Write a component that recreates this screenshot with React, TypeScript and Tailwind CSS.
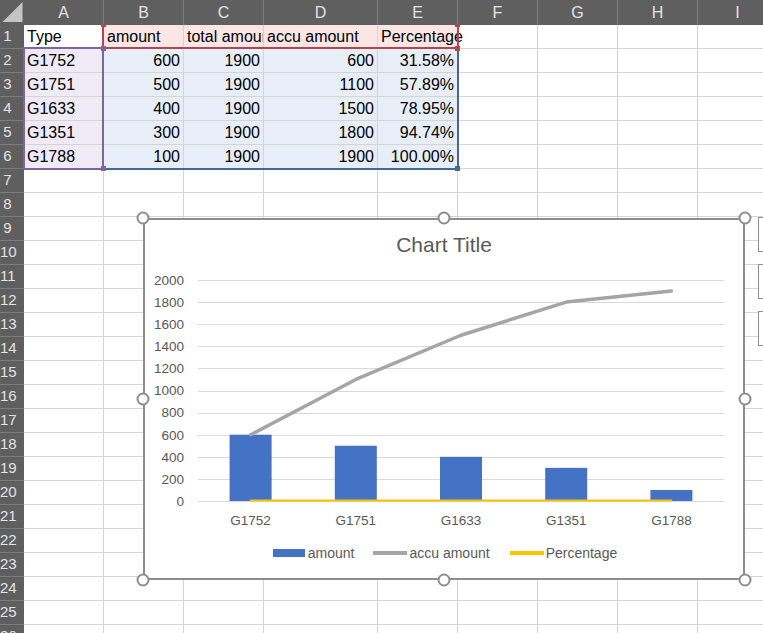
import React from "react";

const letters = ["A", "B", "C", "D", "E", "F", "G", "H", "I"];
const colW = ["w-[80px]", "w-[80px]", "w-[80px]", "w-[114px]", "w-[80px]", "w-[80px]", "w-[80px]", "w-[80px]", "w-[80px]"];

const table = [
  ["Type", "amount", "total amount", "accu amount", "Percentage"],
  ["G1752", "600", "1900", "600", "31.58%"],
  ["G1751", "500", "1900", "1100", "57.89%"],
  ["G1633", "400", "1900", "1500", "78.95%"],
  ["G1351", "300", "1900", "1800", "94.74%"],
  ["G1788", "100", "1900", "1900", "100.00%"],
];

const series = [
  { name: "G1752", amount: 600, accu: 600, pct: 0.3158 },
  { name: "G1751", amount: 500, accu: 1100, pct: 0.5789 },
  { name: "G1633", amount: 400, accu: 1500, pct: 0.7895 },
  { name: "G1351", amount: 300, accu: 1800, pct: 0.9474 },
  { name: "G1788", amount: 100, accu: 1900, pct: 1 },
];

function cellBg(r: number, c: number) {
  if (r === 0) return c >= 1 && c <= 4 ? "bg-[#fbe6e6]" : "";
  if (r <= 5) return c === 0 ? "bg-[#efeaf5]" : c <= 4 ? "bg-[#e8eef8]" : "";
  return "";
}

// plot scale, page coords
const y = (v: number) => 501 - v * 0.1105;
const cx = (i: number) => 198 + 105.2 * (i + 0.5);

const handles = [
  "left-0 top-0",
  "left-1/2 top-0",
  "left-full top-0",
  "left-0 top-1/2",
  "left-full top-1/2",
  "left-0 top-full",
  "left-1/2 top-full",
  "left-full top-full",
];

function Chart() {
  const ticks = [0, 200, 400, 600, 800, 1000, 1200, 1400, 1600, 1800, 2000];
  const accuPts = series.map((s, i) => `${cx(i)},${y(s.accu)}`).join(" ");
  const pctPts = series.map((s, i) => `${cx(i)},${y(s.pct) - 0.5}`).join(" ");

  return (
    <div className="absolute left-[143px] top-[218px] flex items-start">
      <div className="relative">
        <div className="w-[602px] h-[362px] border-2 border-[#8d8d8d] bg-white flex flex-col text-[#595959]">
          <div className="h-[42px] pt-[13px] text-center text-[21px] leading-[24px]">Chart Title</div>
          <svg width="598" height="279" viewBox="145 262 598 279" className="block">
            {ticks.map((t) => (
              <g key={t}>
                <line x1="198" x2="724" y1={Math.round(y(t)) + 0.5} y2={Math.round(y(t)) + 0.5} stroke="#d9d9d9" strokeWidth="1" />
                <text x="184" y={y(t)} dy="0.36em" textAnchor="end" fontSize="13.5" fill="#595959">
                  {t}
                </text>
              </g>
            ))}
            {series.map((s, i) => (
              <rect key={s.name} x={cx(i) - 21} y={y(s.amount)} width="42" height={501 - y(s.amount)} fill="#4472c4" />
            ))}
            <polyline points={accuPts} fill="none" stroke="#a5a5a5" strokeWidth="3.5" strokeLinecap="round" strokeLinejoin="round" />
            <polyline points={pctPts} fill="none" stroke="#ffc000" strokeWidth="2" strokeLinecap="round" />
            {series.map((s, i) => (
              <text key={s.name} x={cx(i)} y="520" dy="0.36em" textAnchor="middle" fontSize="13.5" fill="#595959">
                {s.name}
              </text>
            ))}
          </svg>
          <div className="h-[24px] flex items-center justify-center text-[14px] pl-[2px]">
            <span className="w-[32px] h-[8px] bg-[#4472c4]" />
            <span className="ml-[3px]">amount</span>
            <span className="ml-[19px] w-[34px] h-[4px] bg-[#a5a5a5]" />
            <span className="ml-[2px]">accu amount</span>
            <span className="ml-[20px] w-[34px] h-[4px] bg-[#ffc000]" />
            <span className="ml-[2px]">Percentage</span>
          </div>
        </div>
        {handles.map((h) => (
          <div key={h} className={`absolute ${h} w-[13px] h-[13px] -translate-x-1/2 -translate-y-1/2 rounded-full border-2 border-[#8d8d8d] bg-white`} />
        ))}
      </div>
      {/* chart side buttons */}
      <div className="ml-[13px] -mt-[1px] flex flex-col gap-[12px]">
        <div className="w-[24px] h-[35px] border border-[#8d8d8d] bg-white" />
        <div className="w-[24px] h-[35px] border border-[#8d8d8d] bg-white" />
        <div className="w-[24px] h-[35px] border border-[#8d8d8d] bg-white" />
      </div>
    </div>
  );
}

export default function App() {
  const rowNums = Array.from({ length: 26 }, (_, i) => i + 1);

  return (
    <div className="relative w-[763px] h-[633px] overflow-hidden bg-white font-['Liberation_Sans',Arial,sans-serif]">
      {/* column headers */}
      <div className="flex h-[25px] bg-[#5f5f5f] text-[#e3e3e3]">
        <div className="w-[24px] shrink-0">
          <svg width="24" height="25" className="block">
            <polygon points="22.5,2 22.5,22 2.5,22" fill="#c4c4c4" />
          </svg>
        </div>
        {letters.map((l, i) => (
          <div key={l} className={`${colW[i]} shrink-0 border-r border-[#7c7c7c] flex items-center justify-center text-[16px]`}>
            {l}
          </div>
        ))}
      </div>

      {rowNums.map((n) => {
        const r = n - 1;
        const data = table[r];
        return (
          <div key={n} className="flex h-[24px]">
            <div className="w-[24px] shrink-0 bg-[#5f5f5f] border-b border-[#7c7c7c] text-[#e3e3e3] text-[15px] flex items-center">
              <span className="w-[15px] text-center whitespace-nowrap">{n}</span>
            </div>
            {letters.map((l, c) => {
              const txt = data && c <= 4 ? data[c] : "";
              const right = r > 0 && c > 0;
              return (
                <div
                  key={l}
                  className={`${colW[c]} shrink-0 border-r border-b border-[#d4d4d4] ${cellBg(r, c)} flex items-center pt-[1px] whitespace-nowrap text-[16px] text-black ${
                    right ? "justify-end pr-[3px]" : "pl-[3px]"
                  } ${c === 2 ? "overflow-hidden" : ""}`}
                >
                  {txt}
                </div>
              );
            })}
          </div>
        );
      })}

      {/* range highlights drawn over the cells */}
      <div className="absolute left-[102px] top-[47px] w-[357px] h-[123px] border-2 border-[#41699a]" />
      <div className="absolute left-[102px] top-[24px] w-[357px] h-[25px] border-x-2 border-b-2 border-[#b4454d]" />
      <div className="absolute left-[23px] top-[47px] w-[81px] h-[123px] border-2 border-[#7e64a1]" />
      <div className="absolute left-[101px] top-[46px] w-[5px] h-[5px] bg-[#7e64a1]" />
      <div className="absolute left-[101px] top-[166px] w-[5px] h-[5px] bg-[#7e64a1]" />
      <div className="absolute left-[455px] top-[46px] w-[5px] h-[5px] bg-[#b4454d]" />
      <div className="absolute left-[455px] top-[166px] w-[5px] h-[5px] bg-[#41699a]" />
      <div className="absolute left-[101px] top-[24px] w-[5px] h-[3px] bg-[#b4454d]" />
      <div className="absolute left-[455px] top-[24px] w-[5px] h-[3px] bg-[#b4454d]" />

      <Chart />
    </div>
  );
}
